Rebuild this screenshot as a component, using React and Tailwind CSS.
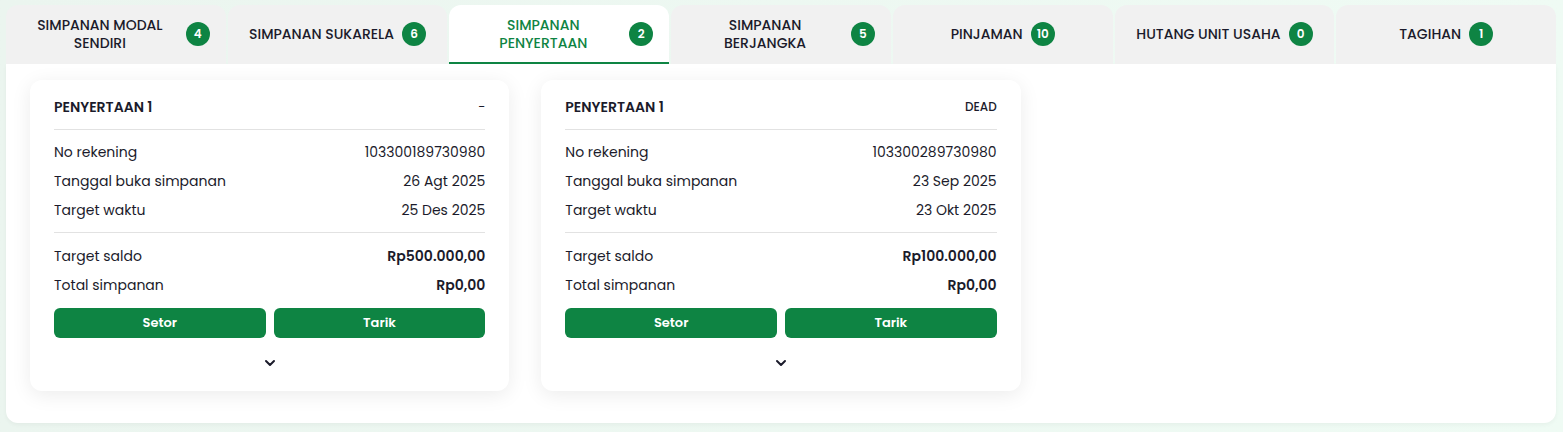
import React, { useState } from "react";

const tabs = [
  { label: "Simpanan Modal Sendiri", count: 4 },
  { label: "Simpanan Sukarela", count: 6 },
  { label: "Simpanan Penyertaan", count: 2 },
  { label: "Simpanan Berjangka", count: 5 },
  { label: "Pinjaman", count: 10 },
  { label: "Hutang Unit Usaha", count: 0 },
  { label: "Tagihan", count: 1 },
];

const accounts = [
  {
    name: "Penyertaan 1",
    status: "-",
    rekening: "103300189730980",
    buka: "26 Agt 2025",
    target: "25 Des 2025",
    saldo: "Rp500.000,00",
    total: "Rp0,00",
  },
  {
    name: "Penyertaan 1",
    status: "DEAD",
    rekening: "103300289730980",
    buka: "23 Sep 2025",
    target: "23 Okt 2025",
    saldo: "Rp100.000,00",
    total: "Rp0,00",
  },
];

function Row({ label, value, bold }) {
  return (
    <div className="flex items-center justify-between h-5 leading-5 text-[14px]">
      <span>{label}</span>
      <span className={bold ? "font-semibold" : ""}>{value}</span>
    </div>
  );
}

function AccountCard({ acc }) {
  return (
    <div className="bg-white rounded-xl shadow-[0_4px_20px_rgba(0,0,0,0.08)] px-6 pt-[17px] pb-5">
      <div className="flex items-center justify-between h-5">
        <h3 className="text-[14px] font-semibold uppercase">{acc.name}</h3>
        <span className={acc.status === "-" ? "text-[13px]" : "text-[12px] font-medium"}>
          {acc.status}
        </span>
      </div>
      <div className="h-px bg-[#e2e2e2] mt-3 mb-3" />
      <div className="flex flex-col gap-[9px]">
        <Row label="No rekening" value={acc.rekening} />
        <Row label="Tanggal buka simpanan" value={acc.buka} />
        <Row label="Target waktu" value={acc.target} />
      </div>
      <div className="h-px bg-[#e2e2e2] mt-3 mb-[13px]" />
      <div className="flex flex-col gap-[9px]">
        <Row label="Target saldo" value={acc.saldo} bold />
        <Row label="Total simpanan" value={acc.total} bold />
      </div>
      <div className="grid grid-cols-2 gap-2 mt-[13px]">
        <button className="h-[30px] rounded-md bg-[#0e8443] text-white text-[13px] font-semibold">
          Setor
        </button>
        <button className="h-[30px] rounded-md bg-[#0e8443] text-white text-[13px] font-semibold">
          Tarik
        </button>
      </div>
      <div className="flex justify-center mt-[17px]">
        <svg width="16" height="16" viewBox="0 0 24 24" fill="none" stroke="#1b1b2b" strokeWidth="3" strokeLinecap="round" strokeLinejoin="round">
          <path d="M6 9l6 6 6-6" />
        </svg>
      </div>
    </div>
  );
}

export default function App() {
  const [active, setActive] = useState(2);

  return (
    <div
      className="min-h-[432px] bg-gradient-to-r from-[#ebf5ef] to-[#effbf4] pt-[5px] pl-[6px] pr-[7px] pb-[10px] text-[#1b1b2b]"
      style={{ fontFamily: "Poppins, Inter, 'Open Sans', sans-serif" }}
    >
      <div className="flex gap-[2px]">
        {tabs.map((t, i) => {
          const isActive = i === active;
          return (
            <button
              key={t.label}
              onClick={() => setActive(i)}
              className={`flex-1 min-w-0 h-[59px] rounded-t-xl flex items-center justify-center gap-2 px-4 border-b-2 ${
                isActive
                  ? "bg-white border-[#0e8443] text-[#0e8443]"
                  : "bg-[#f1f1f1] border-transparent"
              }`}
            >
              <span className="text-[14px] leading-[18px] font-medium uppercase text-center">
                {t.label}
              </span>
              <span className="shrink-0 w-6 h-6 rounded-full bg-[#0e8443] text-white text-[12px] font-semibold flex items-center justify-center">
                {t.count}
              </span>
            </button>
          );
        })}
      </div>
      <div className="bg-white rounded-b-xl shadow-[0_2px_4px_rgba(0,0,0,0.04)] px-6 pt-4 pb-8">
        <div className="grid grid-cols-3 gap-8">
          {accounts.map((acc, i) => (
            <AccountCard key={i} acc={acc} />
          ))}
        </div>
      </div>
    </div>
  );
}
